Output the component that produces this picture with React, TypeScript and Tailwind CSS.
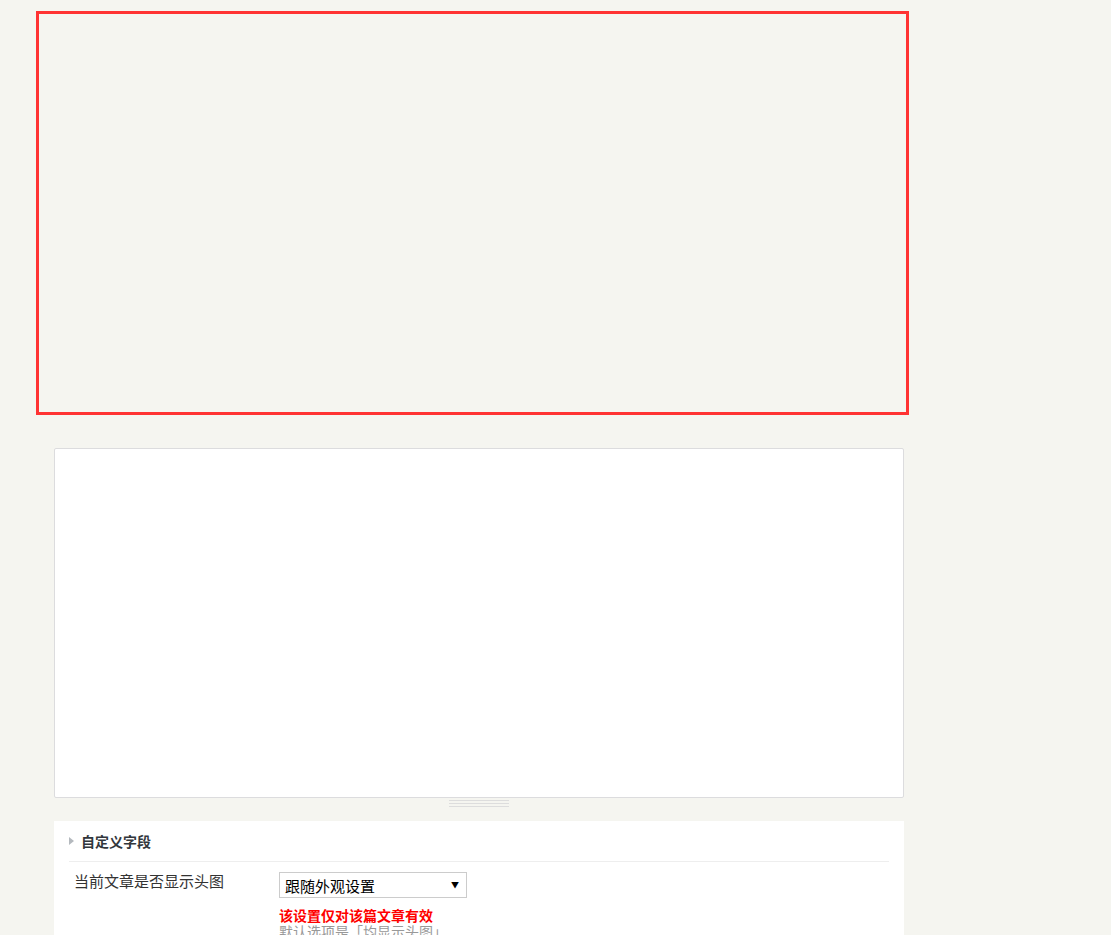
import React from "react";

export default function App() {
  return (
    <div
      className="min-h-screen bg-[#f5f5f0] pt-[11px] pl-[36px] overflow-hidden h-[935px]"
      style={{ fontFamily: '"Microsoft YaHei", "Noto Sans CJK SC", "Noto Sans", sans-serif' }}
    >
      <div className="w-[873px] h-[404px] border-[3px] border-[#ff3333]" />
      <div className="ml-[18px] mt-[33px] w-[850px]">
        <div className="h-[350px] bg-white border border-[#dcdcde] rounded-[2px]" />
        <div className="h-[23px] flex justify-center">
          <div className="mt-[2px] flex flex-col gap-[2px] w-[60px]">
            <div className="h-px bg-[#dddddd]" />
            <div className="h-px bg-[#dddddd]" />
            <div className="h-px bg-[#dddddd]" />
          </div>
        </div>
        <div className="bg-white px-[15px] pb-[20px]">
          <div className="h-[41px] flex items-center border-b border-[#eeeeee]">
            <svg width="5" height="8" viewBox="0 0 5 8" className="mr-[7px]">
              <path d="M0 0 L5 4 L0 8 Z" fill="#b4b9be" />
            </svg>
            <span className="text-[14px] font-bold text-[#32373c] leading-none">自定义字段</span>
          </div>
          <div className="flex pt-[10px]">
            <div className="w-[210px] pl-[5px] text-[15px] leading-[18px] text-[#333333]">
              当前文章是否显示头图
            </div>
            <div className="flex flex-col">
              <div className="w-[188px] h-[26px] border border-[#cccccc] bg-white flex items-center justify-between pl-[5px] pr-[7px]">
                <span className="text-[15px] text-black leading-none">跟随外观设置</span>
                <span className="text-[8px] text-black leading-none">▼</span>
              </div>
              <div className="mt-[10px] text-[14px] font-bold text-[#ff0000] leading-[15px]">
                该设置仅对该篇文章有效
              </div>
              <div className="text-[14px] text-[#999999] leading-[16px]">默认选项是「均显示头图」</div>
            </div>
          </div>
        </div>
      </div>
    </div>
  );
}
